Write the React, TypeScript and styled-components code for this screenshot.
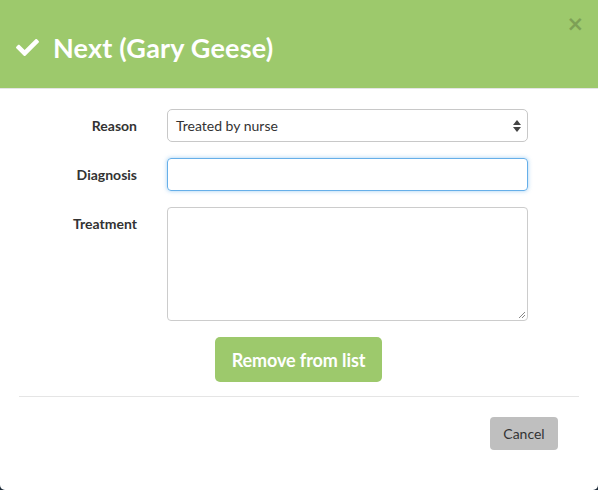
import React from "react";
import styled, { createGlobalStyle } from "styled-components";

const Global = createGlobalStyle`
  html, body { margin: 0; padding: 0; background: #1d2b39; }
  body { font-family: Lato, "Open Sans", sans-serif; }
  * { box-sizing: border-box; }
`;

const Modal = styled.div`
  width: 598px;
  height: 490px;
  background: #fff;
  border-radius: 0 0 5px 5px;
  overflow: hidden;
  display: flex;
  flex-direction: column;
`;

const Header = styled.div`
  height: 89px;
  background: #9dc96c;
  border-bottom: 1px solid #e5e5e5;
  display: flex;
  align-items: center;
  padding: 0 0 0 16px;
  position: relative;
`;

const Title = styled.h4`
  margin: 0;
  font-size: 27px;
  font-weight: 700;
  color: #fff;
  display: flex;
  align-items: center;
  gap: 14px;
  line-height: 1;
  padding-top: 6px;
  letter-spacing: 0.2px;
`;

const Close = styled.span`
  position: absolute;
  top: 14px;
  right: 14px;
  font-size: 21px;
  font-weight: 700;
  color: #000;
  opacity: 0.2;
  line-height: 1;
  font-family: "DejaVu Sans", sans-serif;
`;

const Body = styled.div`
  padding: 20px 70px 14px 20px;
  display: flex;
  flex-direction: column;
  gap: 16px;
`;

const Row = styled.div<{ $top?: boolean }>`
  display: grid;
  grid-template-columns: 117px 1fr;
  column-gap: 30px;
  align-items: ${(p) => (p.$top ? "start" : "center")};
`;

const Label = styled.label<{ $top?: boolean }>`
  text-align: right;
  font-size: 14px;
  font-weight: 700;
  color: #333;
  padding-top: ${(p) => (p.$top ? "8px" : "0")};
`;

const Select = styled.div`
  height: 33px;
  border: 1px solid #c8c8c8;
  border-radius: 5px;
  display: flex;
  align-items: center;
  justify-content: space-between;
  padding: 0 6px 0 8px;
  font-size: 14px;
  color: #333;
`;

const Input = styled.div`
  height: 33px;
  border: 1px solid #66afe9;
  border-radius: 4px;
  box-shadow: 0 0 4px rgba(102, 175, 233, 0.6);
`;

const TextArea = styled.div`
  height: 114px;
  border: 1px solid #ccc;
  border-radius: 4px;
  position: relative;
`;

const Grip = styled.svg`
  position: absolute;
  right: 1px;
  bottom: 1px;
`;

const Center = styled.div`
  display: flex;
  padding-left: 195px;
`;

const GreenButton = styled.button`
  background: #9dc96c;
  color: #fff;
  border: none;
  border-radius: 5px;
  height: 45px;
  width: 167px;
  padding: 0;
  font-family: Lato, sans-serif;
  font-size: 18px;
  font-weight: 700;
  letter-spacing: -0.1px;
`;

const Divider = styled.div`
  margin: 0 19px 0 19px;
  border-top: 1px solid #e5e5e5;
`;

const Footer = styled.div`
  display: flex;
  justify-content: flex-end;
  padding: 20px 40px 0 0;
`;

const GrayButton = styled.button`
  background: #bfbfbf;
  color: #333;
  border: none;
  border-radius: 4px;
  height: 33px;
  width: 68px;
  font-family: Lato, sans-serif;
  font-size: 14px;
`;

export default function App() {
  return (
    <>
      <Global />
      <Modal>
        <Header>
          <Title>
            <svg width="23" height="23" viewBox="0 0 512 512">
              <path
                fill="#fff"
                d="M173.898 439.404l-166.4-166.4c-9.997-9.997-9.997-26.206 0-36.204l36.203-36.204c9.997-9.998 26.207-9.998 36.204 0L192 312.69 432.095 72.596c9.997-9.997 26.207-9.997 36.204 0l36.203 36.204c9.997 9.997 9.997 26.206 0 36.204l-294.4 294.401c-9.998 9.997-26.207 9.997-36.204-.001z"
              />
            </svg>
            Next (Gary Geese)
          </Title>
          <Close>×</Close>
        </Header>
        <Body>
          <Row>
            <Label>Reason</Label>
            <Select>
              <span>Treated by nurse</span>
              <svg width="8" height="12" viewBox="0 0 8 12">
                <path d="M4 0 L8 5 L0 5 Z" fill="#444" />
                <path d="M4 12 L8 7 L0 7 Z" fill="#444" />
              </svg>
            </Select>
          </Row>
          <Row>
            <Label>Diagnosis</Label>
            <Input />
          </Row>
          <Row $top>
            <Label $top>Treatment</Label>
            <TextArea>
              <Grip width="8" height="8" viewBox="0 0 8 8">
                <path d="M7 1 L1 7 M7 4 L4 7" stroke="#888" strokeWidth="1" />
              </Grip>
            </TextArea>
          </Row>
          <Center>
            <GreenButton>Remove from list</GreenButton>
          </Center>
        </Body>
        <Divider />
        <Footer>
          <GrayButton>Cancel</GrayButton>
        </Footer>
      </Modal>
    </>
  );
}
